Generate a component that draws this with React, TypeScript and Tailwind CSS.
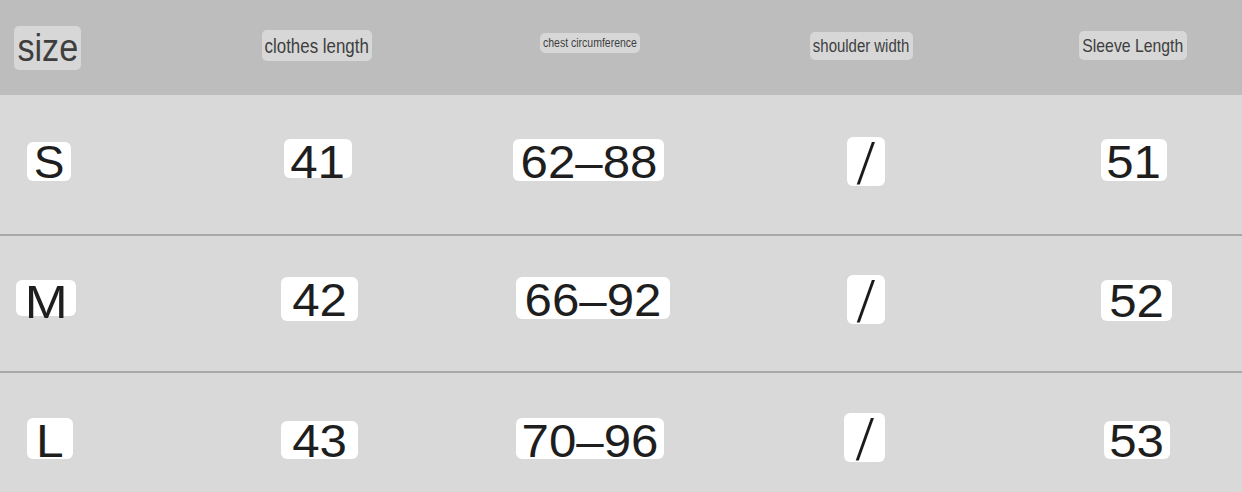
import React from "react";

type Cell = {
  text: string;
  box: string;
  txt: string;
};

const headers: Cell[] = [
  { text: "size", box: "ml-[14px] mt-[26px] w-[67px] h-[44px]", txt: "text-[38px] scale-x-[0.9]" },
  { text: "clothes length", box: "ml-[12px] mt-[30px] w-[110px] h-[31px]", txt: "text-[20px] scale-x-[0.845]" },
  { text: "chest circumference", box: "ml-[40px] mt-[33px] w-[100px] h-[20px]", txt: "text-[12.5px] scale-x-[0.84]" },
  { text: "shoulder width", box: "ml-[10px] mt-[32px] w-[103px] h-[28px]", txt: "text-[18px] scale-x-[0.83]" },
  { text: "Sleeve Length", box: "ml-[19px] mt-[31px] w-[108px] h-[29px]", txt: "text-[19px] scale-x-[0.83]" },
];

type Row = { cls: string; cells: Cell[] };

const rows: Row[] = [
  {
    cls: "h-[139px]",
    cells: [
      { text: "S", box: "ml-[27px] mt-[47px] w-[44px] h-[39px]", txt: "-mt-[3px]" },
      { text: "41", box: "ml-[34px] mt-[44px] w-[68px] h-[39px]", txt: "scale-x-[1.07]" },
      { text: "62–88", box: "ml-[13px] mt-[44px] w-[151px] h-[42px]", txt: "scale-x-[1.07]" },
      { text: "/", box: "ml-[47px] mt-[42px] w-[38px] h-[49px]", txt: "slash" },
      { text: "51", box: "ml-[41px] mt-[44px] w-[66px] h-[42px]", txt: "scale-x-[1.07]" },
    ],
  },
  {
    cls: "h-[135px]",
    cells: [
      { text: "M", box: "ml-[16px] mt-[44px] w-[60px] h-[36px]", txt: "-mt-[1px] scale-x-[1.12]" },
      { text: "42", box: "ml-[31px] mt-[41px] w-[77px] h-[44px]", txt: "scale-x-[1.07]" },
      { text: "66–92", box: "ml-[16px] mt-[41px] w-[154px] h-[42px]", txt: "scale-x-[1.07]" },
      { text: "/", box: "ml-[47px] mt-[39px] w-[38px] h-[49px]", txt: "slash" },
      { text: "52", box: "ml-[41px] mt-[44px] w-[71px] h-[41px]", txt: "-mt-[2px] scale-x-[1.07]" },
    ],
  },
  {
    cls: "h-[119px]",
    cells: [
      { text: "L", box: "ml-[27px] mt-[45px] w-[46px] h-[41px]", txt: "scale-x-[1.08]" },
      { text: "43", box: "ml-[31px] mt-[48px] w-[77px] h-[38px]", txt: "-mt-[3px] scale-x-[1.07]" },
      { text: "70–96", box: "ml-[16px] mt-[45px] w-[148px] h-[41px]", txt: "scale-x-[1.07]" },
      { text: "/", box: "ml-[44px] mt-[40px] w-[41px] h-[49px]", txt: "slash" },
      { text: "53", box: "ml-[44px] mt-[48px] w-[66px] h-[38px]", txt: "-mt-[3px] scale-x-[1.07]" },
    ],
  },
];

const font = { fontFamily: '"Liberation Sans", Arial, sans-serif' };
const slashFont = { fontFamily: '"DejaVu Sans", "Liberation Sans", sans-serif' };

export default function App() {
  return (
    <div className="w-[1242px] h-[492px] overflow-hidden bg-[#d9d9d9]" style={font}>
      {/* header */}
      <div className="grid grid-cols-[250px_250px_300px_260px_182px] h-[95px] bg-[#bdbdbd] items-start">
        {headers.map((h, i) => (
          <div key={i} className="flex">
            <div className={`${h.box} flex items-center justify-center rounded-[5px] bg-[#d7d7d7]`}>
              <span className={`${h.txt} inline-block leading-none whitespace-nowrap text-[#3e3e3e]`}>{h.text}</span>
            </div>
          </div>
        ))}
      </div>
      {rows.map((r, ri) => (
        <React.Fragment key={ri}>
          {ri > 0 && <div className="h-[2px] bg-[#a8a8a8]" />}
          <div className={`${r.cls} grid grid-cols-[250px_250px_300px_260px_182px] items-start`}>
            {r.cells.map((c, ci) =>
              c.txt === "slash" ? (
                <div key={ci} className="flex">
                  <div className={`${c.box} flex items-center justify-center rounded-[6px] bg-white overflow-visible`}>
                    <span className="inline-block text-[52px] font-extralight leading-none text-[#1a1a1a] scale-x-[1.15]" style={slashFont}>/</span>
                  </div>
                </div>
              ) : (
                <div key={ci} className="flex">
                  <div className={`${c.box} flex items-start justify-center rounded-[6px] bg-white`}>
                    <span className={`${c.txt} inline-block text-[46px] leading-none whitespace-nowrap text-[#1e1e1e]`}>{c.text}</span>
                  </div>
                </div>
              )
            )}
          </div>
        </React.Fragment>
      ))}
    </div>
  );
}
